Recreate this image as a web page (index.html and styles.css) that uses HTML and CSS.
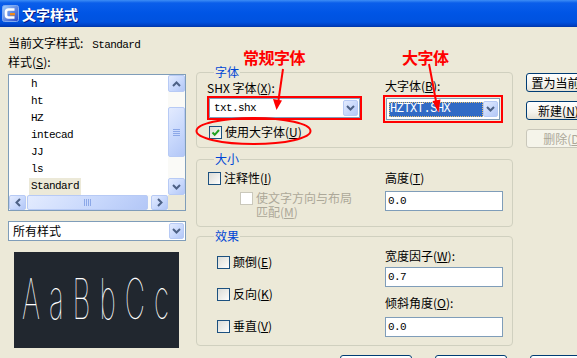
FILE: index.html
```html
<!DOCTYPE html>
<html lang="zh-CN">
<head>
    <meta charset="UTF-8">
    <title>文字样式</title>
    <link rel="stylesheet" href="styles.css">
</head>
<body>
    <div class="titlebar">
        <svg class="app-icon" width="17" height="17" viewBox="0 0 17 17">
            <defs>
                <linearGradient id="ig" x1="0" y1="0" x2="1" y2="1">
                    <stop offset="0" stop-color="#9ED0FF"/>
                    <stop offset="1" stop-color="#2746C8"/>
                </linearGradient>
            </defs>
            <rect x="0.5" y="0.5" width="16" height="16" rx="2" fill="url(#ig)" stroke="#7FA9F0"/>
            <path d="M12.5 4.5H6.5Q4 4.5 4 7v3q0 2.5 2.5 2.5h6" stroke="#fff" stroke-width="2.6" fill="none"/>
            <rect x="8" y="8" width="5" height="2.4" fill="#F08A1C"/>
        </svg>
        <span class="title">文字样式</span>
    </div>

    <div class="dialog">
        <div class="col-left">
            <div class="current">当前文字样式:<span class="mono current-name">Standard</span></div>
            <div class="caption">样式(<u>S</u>):</div>
            <div class="listbox">
                <ul class="items mono">
                    <li>h</li>
                    <li>ht</li>
                    <li>HZ</li>
                    <li>intecad</li>
                    <li>JJ</li>
                    <li>ls</li>
                    <li><span class="picked">Standard</span></li>
                </ul>
                <div class="vscroll">
                    <div class="sb-btn">
                        <svg width="9" height="6" viewBox="0 0 9 6"><path d="M1 5l3.5-3.5L8 5" stroke="#4D6185" stroke-width="2" fill="none"/></svg>
                    </div>
                    <div class="vtrack">
                        <div class="sb-thumb vthumb"><i></i><i></i><i></i><i></i></div>
                    </div>
                    <div class="sb-btn">
                        <svg width="9" height="6" viewBox="0 0 9 6"><path d="M1 1l3.5 3.5L8 1" stroke="#4D6185" stroke-width="2" fill="none"/></svg>
                    </div>
                </div>
                <div class="hscroll">
                    <div class="sb-btn">
                        <svg width="6" height="9" viewBox="0 0 6 9"><path d="M5 1L1.5 4.5 5 8" stroke="#4D6185" stroke-width="2" fill="none"/></svg>
                    </div>
                    <div class="htrack">
                        <div class="sb-thumb hthumb"><i></i><i></i><i></i><i></i></div>
                    </div>
                    <div class="sb-btn">
                        <svg width="6" height="9" viewBox="0 0 6 9"><path d="M1 1l3.5 3.5L1 8" stroke="#4D6185" stroke-width="2" fill="none"/></svg>
                    </div>
                </div>
                <div class="corner"></div>
            </div>
            <div class="combo filter">
                <span class="combo-text">所有样式</span>
                <span class="combo-btn"><svg width="9" height="6" viewBox="0 0 9 6"><path d="M1 1l3.5 3.5L8 1" stroke="#4D6185" stroke-width="2" fill="none"/></svg></span>
            </div>
            <div class="preview"><span class="preview-text">AaBbCc</span></div>
        </div>

        <div class="col-mid">
            <fieldset class="group group-font">
                <legend>字体</legend>
                <div class="cell">
                    <div class="label">SHX 字体(<u>X</u>):</div>
                    <div class="mark mark-shx">
                        <div class="combo">
                            <span class="combo-text mono">txt.shx</span>
                            <span class="combo-btn"><svg width="9" height="6" viewBox="0 0 9 6"><path d="M1 1l3.5 3.5L8 1" stroke="#4D6185" stroke-width="2" fill="none"/></svg></span>
                        </div>
                    </div>
                    <div class="check check-big">
                        <span class="box"><svg width="11" height="11" viewBox="0 0 11 11"><path d="M2.5 5.5l2.2 2.3L9 3" stroke="#21A121" stroke-width="2" fill="none"/></svg></span>
                        使用大字体(<u>U</u>)
                    </div>
                </div>
                <div class="cell">
                    <div class="label label-big">大字体(<u>B</u>):</div>
                    <div class="mark mark-big">
                        <div class="combo combo-big">
                            <span class="combo-text"><span class="selected mono">HZTXT.SHX</span></span>
                            <span class="combo-btn"><svg width="9" height="6" viewBox="0 0 9 6"><path d="M1 1l3.5 3.5L8 1" stroke="#4D6185" stroke-width="2" fill="none"/></svg></span>
                        </div>
                    </div>
                </div>
            </fieldset>

            <fieldset class="group group-size">
                <legend>大小</legend>
                <div class="cell">
                    <div class="check check-note"><span class="box"></span>注释性(<u>I</u>)</div>
                    <div class="check check-off"><span class="box"></span><span class="off-text">使文字方向与布局<br>匹配(<u>M</u>)</span></div>
                </div>
                <div class="cell">
                    <div class="label label-height">高度(<u>T</u>)</div>
                    <div class="field field-height mono">0.0</div>
                </div>
            </fieldset>

            <fieldset class="group group-effect">
                <legend>效果</legend>
                <div class="cell effect-checks">
                    <div class="check"><span class="box"></span>颠倒(<u>E</u>)</div>
                    <div class="check"><span class="box"></span>反向(<u>K</u>)</div>
                    <div class="check"><span class="box"></span>垂直(<u>V</u>)</div>
                </div>
                <div class="cell">
                    <div class="label label-width">宽度因子(<u>W</u>):</div>
                    <div class="field field-width mono">0.7</div>
                    <div class="label label-slant">倾斜角度(<u>O</u>):</div>
                    <div class="field field-slant mono">0.0</div>
                </div>
            </fieldset>
        </div>

        <div class="col-right">
            <div class="btn">置为当前(<u>C</u>)</div>
            <div class="btn">新建(<u>N</u>)...</div>
            <div class="btn btn-off">删除(<u>D</u>)</div>
        </div>
    </div>

    <div class="footer">
        <div class="btn">应用(<u>A</u>)</div>
        <div class="btn">关闭</div>
        <div class="btn">帮助(<u>H</u>)</div>
    </div>

    <svg class="marks" width="577" height="358" viewBox="0 0 577 358">
        <ellipse cx="253.5" cy="131" rx="57" ry="13" stroke="#FF0000" stroke-width="2" fill="none"/>
        <line x1="283" y1="69" x2="278.5" y2="100" stroke="#FF0000" stroke-width="2"/>
        <polygon points="276.5,110 273,99 282,100.5" fill="#FF0000"/>
        <line x1="429" y1="64" x2="436" y2="101" stroke="#FF0000" stroke-width="2"/>
        <polygon points="438.5,112.5 432.5,101 440.5,99.5" fill="#FF0000"/>
    </svg>
    <span class="note note-shx">常规字体</span>
    <span class="note note-big">大字体</span>
</body>
</html>
```

FILE: styles.css
```css
body {
    margin: 0;
    width: 577px;
    height: 358px;
    overflow: hidden;
    position: relative;
    background-color: #ECE9D8;
    font-family: "Noto Sans CJK SC", "Liberation Sans", sans-serif;
    font-size: 12px;
    line-height: 14px;
    color: #000;
}

u {
    text-decoration: underline;
}

.mono {
    font-family: "Liberation Mono", "Noto Sans CJK SC", monospace;
    font-size: 11px;
    letter-spacing: -0.6px;
}

/* title bar */
.titlebar {
    height: 27px;
    display: flex;
    align-items: center;
    padding-left: 2px;
    background: linear-gradient(#3D8DF5 0, #0A5EEA 3px, #0055E5 13px, #0052DF 22px, #0043C8 25px, #0036A8 27px);
}

.app-icon {
    margin-right: 3px;
}

.title {
    color: #fff;
    font-size: 14px;
    font-weight: bold;
    text-shadow: 1px 1px 0 #0A1883;
}

/* dialog body */
.dialog {
    display: flex;
    align-items: flex-start;
    height: 328px;
    padding-left: 8px;
}

.col-left {
    width: 178px;
    flex-shrink: 0;
}

.current {
    margin-top: 9px;
}

.current-name {
    margin-left: 9px;
}

.caption {
    margin-top: 3px;
}

.listbox {
    margin-top: 5px;
    height: 137px;
    box-sizing: border-box;
    border: 1px solid #7F9DB9;
    background-color: #fff;
    display: grid;
    grid-template-columns: 159px 17px;
    grid-template-rows: 120px 15px;
}

.items {
    list-style: none;
    margin: 0;
    padding: 1px 0 0 22px;
    overflow: hidden;
}

.items li {
    height: 17px;
    line-height: 17px;
}

.picked {
    display: inline-block;
    background-color: #ECE9D8;
    padding: 0 2px;
    margin-left: -2px;
}

.vscroll {
    display: flex;
    flex-direction: column;
    background-color: #FAFAF7;
}

.vtrack {
    flex: 1;
    padding-top: 15px;
}

.hscroll {
    display: flex;
    background-color: #FAFAF7;
}

.htrack {
    flex: 1;
    padding-left: 1px;
}

.corner {
    background-color: #ECE9D8;
}

.sb-btn, .sb-thumb {
    box-sizing: border-box;
    border: 1px solid #B7CAF5;
    border-radius: 2px;
    background: linear-gradient(135deg, #E3EBFE 0%, #C8D8FC 55%, #B3C7F7 100%);
    display: flex;
    align-items: center;
    justify-content: center;
}

.sb-btn {
    width: 17px;
    height: 17px;
    flex-shrink: 0;
}

.hscroll .sb-btn {
    height: 15px;
}

.vthumb {
    height: 50px;
    flex-direction: column;
    gap: 1px;
}

.vthumb i {
    width: 7px;
    height: 1px;
    background-color: #8CA8E8;
}

.hthumb {
    width: 121px;
    height: 15px;
    gap: 1px;
}

.hthumb i {
    width: 1px;
    height: 7px;
    background-color: #8CA8E8;
}

/* combo boxes */
.combo {
    height: 20px;
    box-sizing: border-box;
    border: 1px solid #7F9DB9;
    background-color: #fff;
    display: flex;
    align-items: center;
    padding: 1px;
}

.combo-text {
    flex: 1;
    padding-left: 3px;
    line-height: 16px;
    white-space: nowrap;
}

.combo-btn {
    width: 15px;
    height: 16px;
    box-sizing: border-box;
    border: 1px solid #B7CAF5;
    border-radius: 2px;
    background: linear-gradient(135deg, #E3EBFE 0%, #C8D8FC 55%, #B3C7F7 100%);
    display: flex;
    align-items: center;
    justify-content: center;
}

.filter {
    margin-top: 10px;
}

.preview {
    margin: 11px 0 0 6px;
    width: 165px;
    height: 96px;
    background-color: #21272F;
    overflow: hidden;
}

.preview-text {
    display: block;
    margin-top: 17px;
    margin-left: 8px;
    color: #fff;
    font-family: Inter, "DejaVu Sans", sans-serif;
    font-weight: 100;
    font-size: 56px;
    line-height: 60px;
    letter-spacing: 18px;
    white-space: nowrap;
    transform: scaleX(0.5);
    transform-origin: left top;
}

/* group boxes */
.col-mid {
    width: 317px;
    flex-shrink: 0;
    margin-left: 10px;
    margin-top: 38px;
}

.group {
    margin: 0;
    min-width: 0;
    border: 1px solid #D0D0BF;
    border-radius: 4px;
    padding: 2px 9px 7px 10px;
    display: grid;
    grid-template-columns: 176px 120px;
    align-items: start;
}

.group legend {
    color: #0046D5;
    padding: 0 1px;
    margin-left: 7px;
    line-height: 14px;
}

.group-size {
    margin-top: 4px;
}

.group-effect {
    margin-top: 2px;
    padding-bottom: 8px;
}

.label-big {
    margin-top: -2px;
    padding-left: 2px;
}

.mark {
    border: 2px solid #FF0000;
    box-sizing: border-box;
}

.mark-shx {
    margin-top: 1px;
    width: 155px;
    height: 24px;
}

.mark-big {
    margin-top: 2px;
    height: 28px;
    padding: 1px 1px;
}

.combo-big {
    height: 22px;
}

.selected {
    display: block;
    background-color: #316AC5;
    color: #fff;
    outline: 1px dotted #E8C070;
    outline-offset: -1px;
    font-size: 12px;
    letter-spacing: -0.5px;
    line-height: 15px;
    padding-left: 1px;
    margin-left: -2px;
}

.check {
    display: flex;
    align-items: center;
    height: 16px;
    white-space: nowrap;
}

.box {
    width: 13px;
    height: 13px;
    box-sizing: border-box;
    border: 1px solid #1C5180;
    background: linear-gradient(135deg, #DCDCD7 0%, #F3F3F0 70%, #fff 100%);
    margin-right: 3px;
    display: flex;
    align-items: center;
    justify-content: center;
    flex-shrink: 0;
}

.check-big {
    margin-top: 4px;
    margin-left: 2px;
}

.check-note {
    margin-top: 3px;
    height: 14px;
    margin-left: 1px;
}

.check-off {
    margin-top: 6px;
    margin-left: 33px;
    align-items: flex-start;
    height: auto;
    color: #ACA899;
}

.check-off .box {
    border-color: #CAC8BB;
    background: #fff;
    margin-top: 1px;
}

.off-text {
    line-height: 14px;
}

.label-height {
    margin-top: 3px;
    padding-left: 2px;
}

.field {
    margin-left: 2px;
    width: 118px;
    height: 20px;
    box-sizing: border-box;
    border: 1px solid #7F9DB9;
    background-color: #fff;
    line-height: 18px;
    padding-left: 2px;
}

.field-height {
    margin-top: 6px;
}

.effect-checks {
    padding-left: 10px;
    padding-top: 9px;
    display: flex;
    flex-direction: column;
    gap: 16px;
}

.label-width {
    margin-top: 4px;
    padding-left: 2px;
}

.field-width {
    margin-top: 4px;
}

.label-slant {
    margin-top: 9px;
    padding-left: 2px;
}

.field-slant {
    margin-top: 7px;
}

/* buttons */
.col-right {
    margin-left: 13px;
    margin-top: 46px;
    display: flex;
    flex-direction: column;
    gap: 9px;
}

.btn {
    width: 75px;
    height: 19px;
    box-sizing: border-box;
    flex-shrink: 0;
    border: 1px solid #003C74;
    border-radius: 3px;
    background: linear-gradient(#FFFFFF 0%, #F4F3EE 60%, #E3E0D5 100%);
    text-align: center;
    line-height: 17px;
    white-space: nowrap;
}

.btn-off {
    border-color: #C9C7BA;
    background: #F5F4EA;
    color: #ACA899;
}

.footer {
    display: flex;
    gap: 23px;
    padding-left: 340px;
}

.footer .btn {
    width: 72px;
    height: 22px;
}

/* red annotations over the dialog */
.marks {
    position: absolute;
    left: 0;
    top: 0;
    pointer-events: none;
}

.note {
    position: absolute;
    top: 47px;
    color: #FF0000;
    font-size: 16px;
    font-weight: bold;
    line-height: 20px;
    letter-spacing: -0.5px;
}

.note-shx {
    left: 243px;
}

.note-big {
    left: 402px;
}
```
